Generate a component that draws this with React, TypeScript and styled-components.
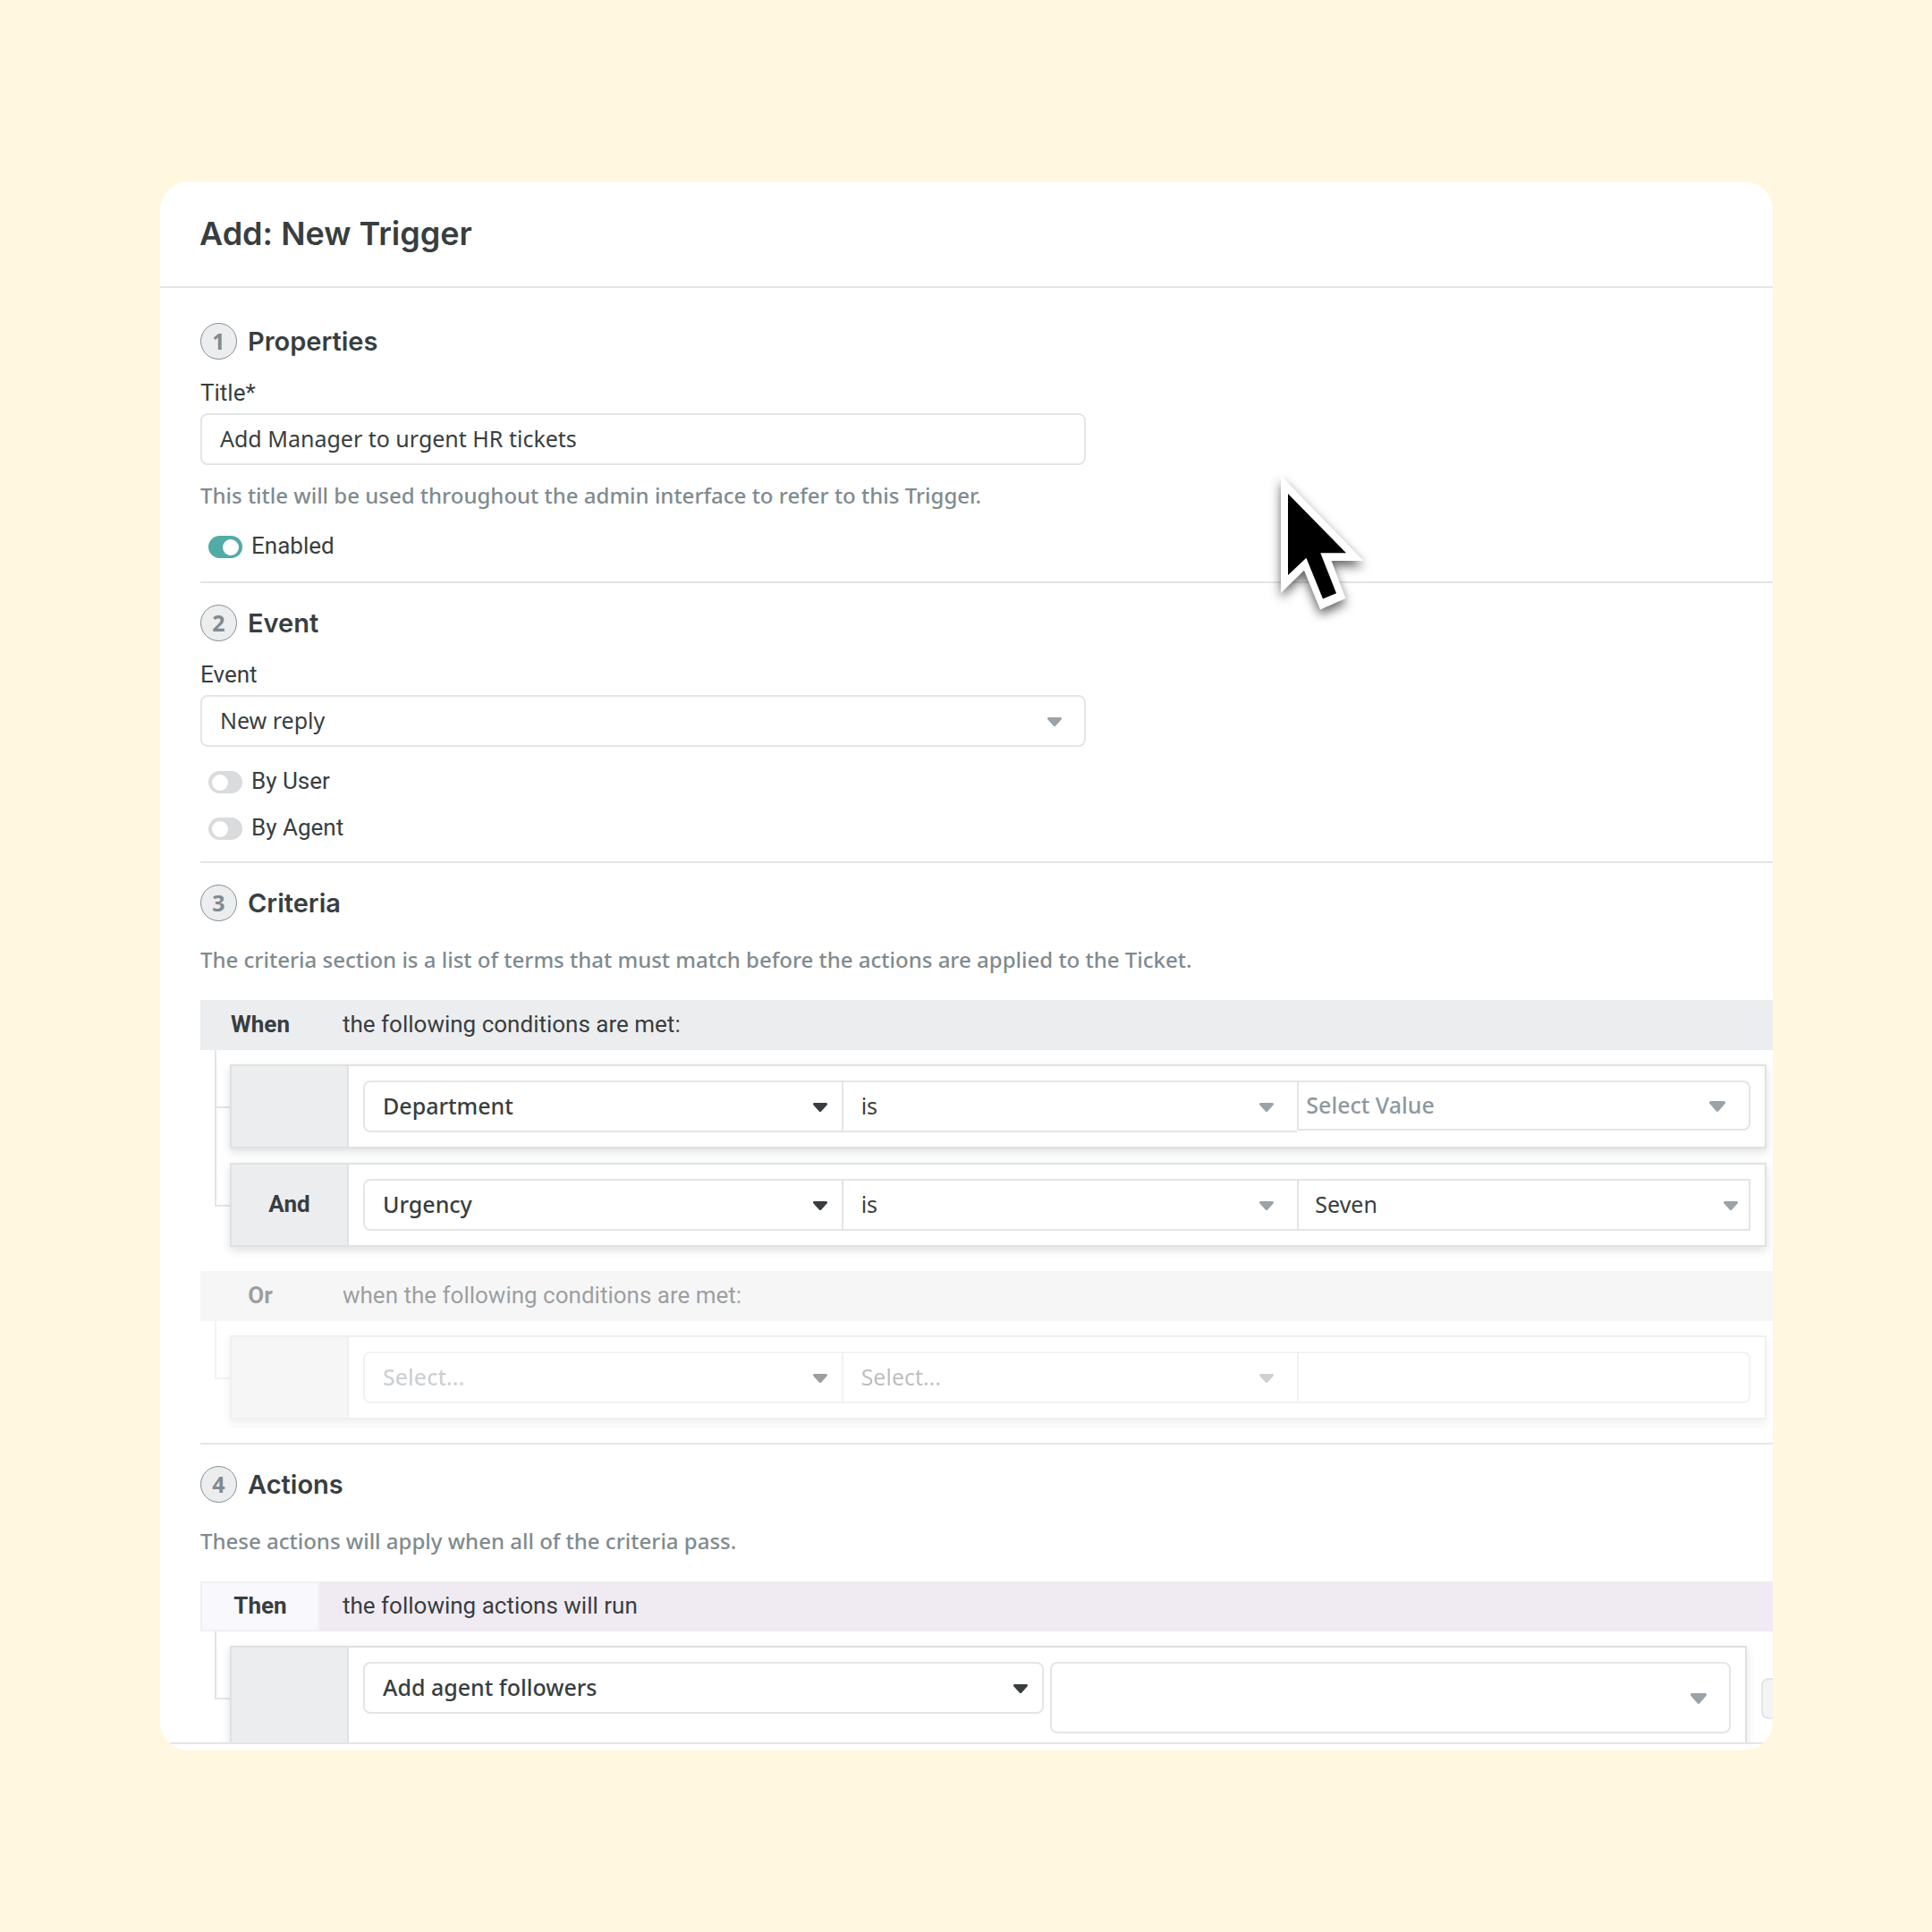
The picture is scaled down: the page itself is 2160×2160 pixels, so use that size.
import React, { useId, useState } from "react";
import styled, { createGlobalStyle, css } from "styled-components";

const ink = "#383e40";
const muted = "#7f8b8f";
const caretGrey = "#9aa3a9";
const line = "#e3e5e6";
const panel = "#ecedef";
const uiFont = `Roboto, "Liberation Sans", sans-serif`;
const headFont = `Inter, "Liberation Sans", sans-serif`;
const textFont = `"Noto Sans", "Liberation Sans", sans-serif`;

const GlobalStyle = createGlobalStyle`
  *, *::before, *::after { box-sizing: border-box; }
  body { margin: 0; background: #fff7df; color: ${ink}; font-family: ${textFont}; font-size: 25px; }
  h1, h2, p, ul { margin: 0; padding: 0; }
  input, select, button { font: inherit; color: inherit; margin: 0; }
`;

const Page = styled.main`
  display: flex;
  height: 100vh;
  padding: 203px 178px 203px 179px;
`;

const Card = styled.form`
  position: relative;
  flex: 1;
  min-width: 0;
  display: flex;
  flex-direction: column;
  overflow: hidden;
  background: #fff;
  border-radius: 32px;
`;

const Header = styled.header`
  flex: none;
  padding: 34px 44px 35px;
  border-bottom: 2px solid ${line};
`;

const Title = styled.h1`
  font: 600 36px/48px ${headFont};
`;

const Body = styled.div`
  flex: 1;
  min-height: 0;
  overflow: hidden;
  padding: 15px 0 0 45px;
`;

const Footer = styled.footer`
  flex: none;
  height: 9px;
  border-top: 2px solid ${line};
`;

const Section = styled.section<{ $end?: number }>`
  padding: 24px 0 ${(p) => p.$end ?? 24}px;
  & + & {
    border-top: 2px solid ${line};
  }
`;

const SectionHead = styled.div`
  display: flex;
  align-items: center;
  gap: 12px;
  height: 41px;
`;

const Step = styled.span`
  display: grid;
  place-items: center;
  width: 41px;
  height: 41px;
  padding-bottom: 2px;
  border: 1px solid #838e91;
  border-radius: 50%;
  background: ${panel};
  color: ${muted};
  font: 700 25px/36px ${textFont};
`;

const SectionTitle = styled.h2`
  font: 600 29px/40px ${headFont};
`;

const FieldLabel = styled.label`
  display: block;
  margin: 21px 0 7px;
  font: 400 26px/32px ${uiFont};
`;

const Hint = styled.p<{ $lead?: boolean }>`
  margin: ${(p) => (p.$lead ? "26px 0 28px" : "17px 0 23px")};
  color: ${muted};
  font-size: 24px;
  font-weight: 500;
  line-height: 34px;
`;

const fieldBox = css`
  width: 100%;
  height: 58px;
  border: 2px solid ${line};
  border-radius: 8px;
  background: #fff;
  outline: none;
`;

const TextInput = styled.input`
  ${fieldBox}
  display: block;
  max-width: 990px;
  padding: 0 20px 2px;
`;

const SelectWrap = styled.div<{ $narrow?: boolean }>`
  display: grid;
  align-items: center;
  align-content: start;
  min-width: 0;
  max-width: ${(p) => (p.$narrow ? "990px" : "none")};
`;

const SelectBox = styled.select<{ $tone?: string; $height: number; $pad: number; $medium?: boolean }>`
  ${fieldBox}
  grid-area: 1 / 1;
  appearance: none;
  height: ${(p) => p.$height}px;
  padding: 0 44px 2px ${(p) => p.$pad}px;
  color: ${(p) => p.$tone ?? ink};
  font-weight: ${(p) => (p.$medium ? 500 : 400)};
  opacity: 1;
`;

const Caret = styled.svg<{ $tone: string; $right: number; $large?: boolean }>`
  grid-area: 1 / 1;
  justify-self: end;
  width: ${(p) => (p.$large ? 18 : 16)}px;
  height: ${(p) => (p.$large ? 12 : 10)}px;
  margin: 2px ${(p) => p.$right}px 0 0;
  fill: ${(p) => p.$tone};
  pointer-events: none;
`;

const ToggleRow = styled.label`
  display: flex;
  align-items: center;
  gap: 10px;
  width: fit-content;
  margin-left: 9px;
  font: 400 26px/32px ${uiFont};
  & + & {
    margin-top: 20px;
  }
`;

const ToggleList = styled.div`
  margin-top: 22px;
`;

const Switch = styled.input`
  appearance: none;
  display: flex;
  align-items: center;
  width: 38px;
  height: 25px;
  margin-top: 3px;
  padding: 0 4px;
  border-radius: 13px;
  background: #d9dbdc;
  &::before {
    content: "";
    width: 18px;
    height: 18px;
    border-radius: 50%;
    background: #fff;
  }
  &:checked {
    justify-content: flex-end;
    background: #50aca4;
  }
`;

const Group = styled.div<{ $faded?: boolean }>`
  opacity: ${(p) => (p.$faded ? 0.5 : 1)};
  & + & {
    margin-top: 27px;
  }
`;

const Bar = styled.div<{ $accent?: boolean }>`
  display: flex;
  align-items: stretch;
  height: 56px;
  background: ${(p) => (p.$accent ? "#f0ebf3" : panel)};
  font: 400 26px/54px ${uiFont};
`;

const BarKey = styled.strong<{ $accent?: boolean }>`
  width: 134px;
  margin-right: 25px;
  text-align: center;
  font-weight: 700;
  ${(p) =>
    p.$accent &&
    css`
      border: 2px solid #f1eff4;
      background: #f9f8fc;
      line-height: 50px;
    `}
`;

const Item = styled.div`
  display: flex;
`;

const Branch = styled.div`
  flex: none;
  display: flex;
  flex-direction: column;
  width: 17px;
  margin-left: 16px;
`;

const BranchTop = styled.span`
  flex: 1 0 19px;
  border-left: 2px solid ${line};
  border-bottom: 2px solid ${line};
`;

const BranchRest = styled.span<{ $last: boolean }>`
  flex: 1 0 0;
  border-left: ${(p) => (p.$last ? 0 : 2)}px solid ${line};
`;

const Rule = styled.div<{ $action?: boolean }>`
  flex: 1;
  display: flex;
  min-width: 0;
  margin: 16px ${(p) => (p.$action ? 16 : 7)}px 0 0;
  border: 2px solid #dfe1e2;
  background: #fff;
  box-shadow: 0 4px 9px rgba(50, 60, 70, 0.16);
`;

const RuleKey = styled.strong`
  display: grid;
  place-items: center;
  flex: none;
  width: 131px;
  padding-bottom: 2px;
  border-right: 2px solid #dfe1e2;
  background: ${panel};
  font: 700 26px/32px ${uiFont};
`;

const Joined = styled.div<{ $square?: boolean }>`
  flex: 1;
  display: grid;
  grid-template-columns: 537fr 508fr 507fr;
  min-width: 0;
  padding: 16px;
  & > * + * > :first-child {
    border-left: 0;
  }
  & > :first-child > :first-child {
    border-radius: 8px 0 0 8px;
  }
  & > :nth-child(2) > :first-child {
    border-right: 0;
    border-radius: 0;
  }
  & > :last-child > :first-child {
    border-radius: ${(p) => (p.$square ? "0" : "0 8px 8px 0")};
    border-left: 2px solid ${line};
  }
`;

const ValueInput = styled.input`
  ${fieldBox}
  padding: 0 16px;
`;

const ValueWrap = styled.div`
  display: grid;
  min-width: 0;
`;

const Pair = styled.div`
  flex: 1;
  display: grid;
  grid-template-columns: 1fr 1fr;
  gap: 7px;
  align-items: start;
  min-width: 0;
  padding: 16px;
`;

const MoreButton = styled.button`
  flex: none;
  align-self: flex-start;
  width: 46px;
  height: 46px;
  margin: 52px -33px 0 0;
  border: 2px solid ${line};
  border-radius: 8px;
  background: #f4f4f5;
`;

const Pointer = styled.svg`
  position: absolute;
  left: 1243px;
  top: 319px;
  width: 120px;
  height: 180px;
  overflow: visible;
  pointer-events: none;
  filter: drop-shadow(0 6px 6px rgba(0, 0, 0, 0.6));
`;

type PickProps = {
  label: string;
  value: string;
  id?: string;
  tone?: string;
  caret?: string;
  right?: number;
  pad?: number;
  height?: number;
  large?: boolean;
  medium?: boolean;
  narrow?: boolean;
  disabled?: boolean;
};

function Pick({
  label,
  value,
  id,
  tone,
  caret = caretGrey,
  right = 18,
  pad = 20,
  height = 58,
  large,
  medium,
  narrow,
  disabled,
}: PickProps) {
  return (
    <SelectWrap $narrow={narrow}>
      <SelectBox
        id={id}
        aria-label={id ? undefined : label}
        $tone={tone}
        $pad={pad}
        $height={height}
        $medium={medium}
        disabled={disabled}
      >
        <option>{value}</option>
      </SelectBox>
      <Caret $tone={caret} $right={right} $large={large} viewBox="0 0 16 10" preserveAspectRatio="none" aria-hidden="true">
        <path d="M1.4 0h13.2c1.3 0 1.8 1.5.9 2.6L9.2 9.4c-.7.8-1.7.8-2.4 0L.5 2.6C-.4 1.5.1 0 1.4 0z" />
      </Caret>
    </SelectWrap>
  );
}

function Toggle({ label, on = false }: { label: string; on?: boolean }) {
  const [checked, setChecked] = useState(on);
  return (
    <ToggleRow>
      <Switch type="checkbox" role="switch" checked={checked} onChange={() => setChecked(!checked)} />
      {label}
    </ToggleRow>
  );
}

function Heading({ step, children }: { step: number; children: string }) {
  return (
    <SectionHead>
      <Step>{step}</Step>
      <SectionTitle>{children}</SectionTitle>
    </SectionHead>
  );
}

function Connector({ last = false }: { last?: boolean }) {
  return (
    <Branch aria-hidden="true">
      <BranchTop />
      <BranchRest $last={last} />
    </Branch>
  );
}

export default function App() {
  const titleId = useId();
  const eventId = useId();
  const [title, setTitle] = useState("Add Manager to urgent HR tickets");

  return (
    <Page>
      <GlobalStyle />
      <Card onSubmit={(e: React.FormEvent) => e.preventDefault()}>
        <Header>
          <Title>Add: New Trigger</Title>
        </Header>
        <Body>
          <Section>
            <Heading step={1}>Properties</Heading>
            <FieldLabel htmlFor={titleId}>Title*</FieldLabel>
            <TextInput id={titleId} value={title} onChange={(e) => setTitle(e.target.value)} />
            <Hint>This title will be used throughout the admin interface to refer to this Trigger.</Hint>
            <Toggle label="Enabled" on />
          </Section>

          <Section $end={22}>
            <Heading step={2}>Event</Heading>
            <FieldLabel htmlFor={eventId}>Event</FieldLabel>
            <Pick id={eventId} label="Event" value="New reply" right={27} narrow />
            <ToggleList>
              <Toggle label="By User" />
              <Toggle label="By Agent" />
            </ToggleList>
          </Section>

          <Section $end={26}>
            <Heading step={3}>Criteria</Heading>
            <Hint $lead>
              The criteria section is a list of terms that must match before the actions are applied to the Ticket.
            </Hint>
            <Group>
              <Bar>
                <BarKey>When</BarKey>
                <span>the following conditions are met:</span>
              </Bar>
              <Item>
                <Connector />
                <Rule>
                  <RuleKey />
                  <Joined>
                    <Pick label="Criterion" value="Department" caret={ink} medium />
                    <Pick label="Operator" value="is" right={26} />
                    <Pick label="Department value" value="Select Value" tone="#8e989d" pad={8} right={28} height={56} large medium />
                  </Joined>
                </Rule>
              </Item>
              <Item>
                <Connector last />
                <Rule>
                  <RuleKey>And</RuleKey>
                  <Joined $square>
                    <Pick label="Criterion" value="Urgency" caret={ink} medium />
                    <Pick label="Operator" value="is" right={26} />
                    <Pick label="Urgency value" value="Seven" pad={18} right={14} />
                  </Joined>
                </Rule>
              </Item>
            </Group>
            <Group $faded>
              <Bar>
                <BarKey>Or</BarKey>
                <span>when the following conditions are met:</span>
              </Bar>
              <Item>
                <Connector last />
                <Rule>
                  <RuleKey />
                  <Joined>
                    <Pick label="Criterion" value="Select..." tone={caretGrey} caret={ink} medium disabled />
                    <Pick label="Operator" value="Select..." tone="#7a7d7f" right={26} disabled />
                    <ValueWrap>
                      <ValueInput aria-label="Value" disabled />
                    </ValueWrap>
                  </Joined>
                </Rule>
              </Item>
            </Group>
          </Section>

          <Section>
            <Heading step={4}>Actions</Heading>
            <Hint $lead>These actions will apply when all of the criteria pass.</Hint>
            <Group>
              <Bar $accent>
                <BarKey $accent>Then</BarKey>
                <span>the following actions will run</span>
              </Bar>
              <Item>
                <Connector last />
                <Rule $action>
                  <RuleKey />
                  <Pair>
                    <Pick label="Action" value="Add agent followers" caret={ink} medium />
                    <Pick label="Followers" value="" right={27} height={80} large />
                  </Pair>
                </Rule>
                <MoreButton type="button" aria-label="Remove action" />
              </Item>
            </Group>
          </Section>
        </Body>
        <Footer />
        <Pointer viewBox="0 0 120 180" aria-hidden="true">
          <path d="M10 9.5 102.5 105H66.6L82.5 147 54 159.5 36 115.7 10 141Z" fill="#fff" />
          <path d="M18 30 83 96.3H54.3L72 141.3 57 147.5 38.4 101.7 18 121Z" />
        </Pointer>
      </Card>
    </Page>
  );
}
